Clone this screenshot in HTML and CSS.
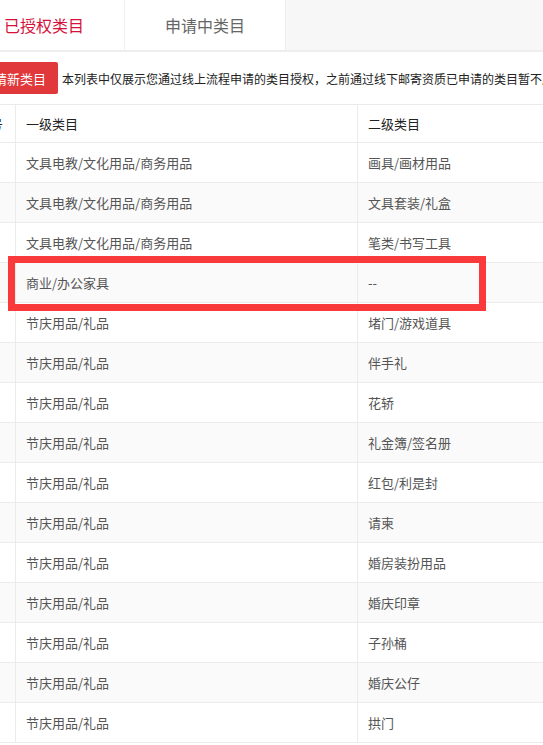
FILE: index.html
```html
<!DOCTYPE html>
<html lang="zh-CN">
<head>
    <meta charset="UTF-8">
    <meta name="viewport" content="width=device-width, initial-scale=1.0">
    <title>类目管理</title>
    <link rel="stylesheet" href="styles.css">
</head>
<body>
    <div class="page">
        <div class="tabs">
            <div class="tab active">已授权类目</div>
            <div class="tab">申请中类目</div>
        </div>

        <div class="toolbar">
            <button class="btn-apply">申请新类目</button>
            <span class="note">本列表中仅展示您通过线上流程申请的类目授权，之前通过线下邮寄资质已申请的类目暂不展示</span>
        </div>

        <div class="table-wrap">
            <table class="cat-table">
                <thead>
                    <tr>
                        <th class="col-no">序号</th>
                        <th class="col-first">一级类目</th>
                        <th class="col-second">二级类目</th>
                    </tr>
                </thead>
                <tbody>
                    <tr><td class="col-no">1</td><td>文具电教/文化用品/商务用品</td><td>画具/画材用品</td></tr>
                    <tr><td class="col-no">2</td><td>文具电教/文化用品/商务用品</td><td>文具套装/礼盒</td></tr>
                    <tr><td class="col-no">3</td><td>文具电教/文化用品/商务用品</td><td>笔类/书写工具</td></tr>
                    <tr><td class="col-no">4</td><td>商业/办公家具</td><td>--</td></tr>
                    <tr><td class="col-no">5</td><td>节庆用品/礼品</td><td>堵门/游戏道具</td></tr>
                    <tr><td class="col-no">6</td><td>节庆用品/礼品</td><td>伴手礼</td></tr>
                    <tr><td class="col-no">7</td><td>节庆用品/礼品</td><td>花轿</td></tr>
                    <tr><td class="col-no">8</td><td>节庆用品/礼品</td><td>礼金簿/签名册</td></tr>
                    <tr><td class="col-no">9</td><td>节庆用品/礼品</td><td>红包/利是封</td></tr>
                    <tr><td class="col-no">10</td><td>节庆用品/礼品</td><td>请柬</td></tr>
                    <tr><td class="col-no">11</td><td>节庆用品/礼品</td><td>婚房装扮用品</td></tr>
                    <tr><td class="col-no">12</td><td>节庆用品/礼品</td><td>婚庆印章</td></tr>
                    <tr><td class="col-no">13</td><td>节庆用品/礼品</td><td>子孙桶</td></tr>
                    <tr><td class="col-no">14</td><td>节庆用品/礼品</td><td>婚庆公仔</td></tr>
                    <tr><td class="col-no">15</td><td>节庆用品/礼品</td><td>拱门</td></tr>
                </tbody>
            </table>
            <div class="mark-box"></div>
        </div>
    </div>
</body>
</html>
```

FILE: styles.css
```css
body {
    margin: 0;
    overflow: hidden;
    background-color: #fff;
    font-family: "Microsoft YaHei", "Noto Sans CJK SC", "Noto Sans", sans-serif;
    color: #333;
}
.page {
    margin-left: -36px;
    width: 720px;
}
.tabs {
    display: flex;
    height: 50px;
    background-color: #f7f7f7;
    border-bottom: 2px solid #eee;
}
.tab {
    width: 160px;
    background-color: #fff;
    border-right: 1px solid #eee;
    display: flex;
    align-items: center;
    justify-content: center;
    font-size: 16px;
    color: #666;
}
.tab.active {
    color: #d4123a;
}
.toolbar {
    display: flex;
    align-items: center;
    padding-top: 10px;
    height: 32px;
}
.btn-apply {
    height: 32px;
    margin-left: 5px;
    padding: 0 12px;
    border: none;
    border-radius: 2px;
    background-color: #e0383b;
    color: #fff;
    font-family: inherit;
    font-size: 13px;
}
.note {
    margin-left: 4px;
    font-size: 12px;
    color: #222;
    white-space: nowrap;
}
.table-wrap {
    position: relative;
    margin-top: 10px;
}
.cat-table {
    width: 720px;
    border-collapse: collapse;
    font-size: 13px;
    table-layout: fixed;
}
.cat-table th,
.cat-table td {
    border: 1px solid #ebebeb;
    text-align: left;
    padding: 0 10px;
    white-space: nowrap;
    overflow: hidden;
}
.cat-table th {
    height: 37px;
    font-weight: normal;
    color: #222;
}
.cat-table td {
    height: 39px;
    color: #555;
}
.cat-table tbody tr:nth-child(even) td {
    background-color: #fafafa;
}
.cat-table .col-no {
    width: 30px;
    text-align: center;
}
.cat-table th.col-first {
    width: 321px;
}
.mark-box {
    position: absolute;
    top: 152px;
    left: 44px;
    width: 464px;
    height: 41px;
    border: 7px solid #fa3a3a;
}
```
